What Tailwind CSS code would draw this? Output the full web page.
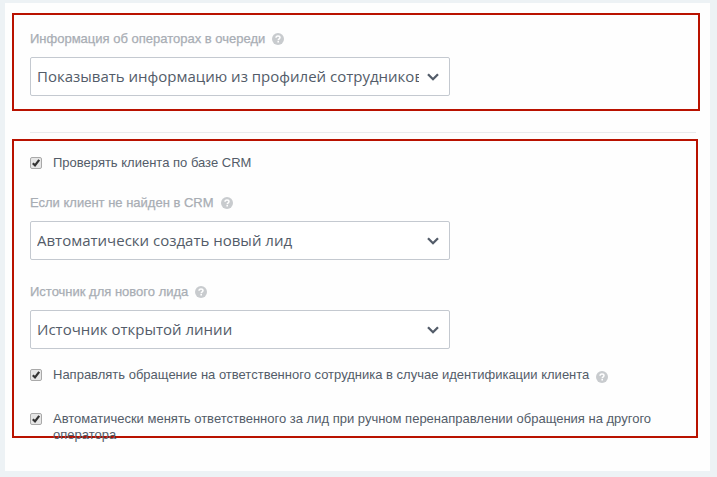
<!DOCTYPE html>
<html lang="ru">
<head>
<meta charset="utf-8">
<title>CRM</title>
<script src="https://cdn.jsdelivr.net/npm/@tailwindcss/browser@4"></script>
</head>
<body class="h-[477px] overflow-hidden bg-[#edf2f5] pt-[3px] pl-[5px] font-['Liberation_Sans',Arial,sans-serif] text-[13px] text-[#535c69]">
<svg class="hidden">
  <symbol id="help" viewBox="0 0 12 12"><circle cx="6" cy="6" r="6" fill="#c8cbce"/><path d="M4 4.7C4 3.5 4.9 2.9 6 2.9s2 .6 2 1.7C8 5.8 6.2 5.8 6.2 7.2" fill="none" stroke="#fff" stroke-width="1.5"/><path d="M5.4 8h1.6v1.5H5.4z" fill="#fff"/></symbol>
  <symbol id="chevron" viewBox="0 0 12 8"><path d="M1 1.2l5 5 5-5" fill="none" stroke="#535c69" stroke-width="2.3"/></symbol>
  <symbol id="check" viewBox="0 0 12 12"><rect x=".5" y=".5" width="11" height="11" rx="1.5" fill="#e6e6e6" stroke="#a9a9a9"/><path d="M2.8 6.2l2.2 2.2 4.2-5.6" fill="none" stroke="#333" stroke-width="2.2"/></symbol>
</svg>
<main class="h-[468px] w-[705px] bg-[#fefefe] pt-[10px] pl-[7px]">
  <section class="h-[98px] w-[688px] border-2 border-[#b91200] pt-[16px] pl-[16px]">
    <div class="flex h-[16px] items-center text-[#a8adb4]"><span class="whitespace-nowrap [-webkit-text-stroke:0.25px_#a8adb4]">Информация об операторах в очереди</span><svg class="ml-[7px] size-[12px]"><use href="#help"/></svg></div>
    <div class="mt-[10px] flex h-[39px] w-[420px] items-center rounded-[2px] border border-[#c4c9d0] bg-white pr-[10px] pl-[6px] font-['Open_Sans',sans-serif] text-[15px]"><span class="w-[382px] overflow-hidden whitespace-nowrap">Показывать информацию из профилей сотрудников</span><svg class="ml-auto h-[8px] w-[12px]"><use href="#chevron"/></svg></div>
  </section>
  <div class="mt-[21px] ml-[18px] h-px w-[666px] bg-[#e9ebed]"></div>
  <section class="mt-[6px] h-[299px] w-[686px] border-2 border-[#b91200] pt-[13px] pl-[16px]">
    <div class="flex h-[18px] items-center"><svg class="size-[12px]"><use href="#check"/></svg><span class="ml-[11px] whitespace-nowrap">Проверять клиента по базе CRM</span></div>
    <div class="mt-[23px] flex h-[16px] items-center text-[#a8adb4]"><span class="whitespace-nowrap [-webkit-text-stroke:0.25px_#a8adb4]">Если клиент не найден в CRM</span><svg class="ml-[7px] size-[12px]"><use href="#help"/></svg></div>
    <div class="mt-[10px] flex h-[39px] w-[420px] items-center rounded-[2px] border border-[#c4c9d0] bg-white pr-[10px] pl-[6px] font-['Open_Sans',sans-serif] text-[15px]"><span class="w-[382px] overflow-hidden whitespace-nowrap">Автоматически создать новый лид</span><svg class="ml-auto h-[8px] w-[12px]"><use href="#chevron"/></svg></div>
    <div class="mt-[24px] flex h-[16px] items-center text-[#a8adb4]"><span class="whitespace-nowrap [-webkit-text-stroke:0.25px_#a8adb4]">Источник для нового лида</span><svg class="ml-[7px] size-[12px]"><use href="#help"/></svg></div>
    <div class="mt-[10px] flex h-[39px] w-[420px] items-center rounded-[2px] border border-[#c4c9d0] bg-white pr-[10px] pl-[6px] font-['Open_Sans',sans-serif] text-[15px]"><span class="w-[382px] overflow-hidden whitespace-nowrap">Источник открытой линии</span><svg class="ml-auto h-[8px] w-[12px]"><use href="#chevron"/></svg></div>
    <div class="mt-[17px] flex h-[18px] items-center"><svg class="size-[12px]"><use href="#check"/></svg><span class="ml-[11px] whitespace-nowrap">Направлять обращение на ответственного сотрудника в случае идентификации клиента</span><svg class="mt-[4px] ml-[7px] size-[12px]"><use href="#help"/></svg></div>
    <div class="mt-[27px] flex items-start"><svg class="mt-[2px] size-[12px] shrink-0"><use href="#check"/></svg><div class="ml-[11px] leading-[16px] whitespace-nowrap">Автоматически менять ответственного за лид при ручном перенаправлении обращения на другого<br>оператора</div></div>
  </section>
</main>
</body>
</html>
